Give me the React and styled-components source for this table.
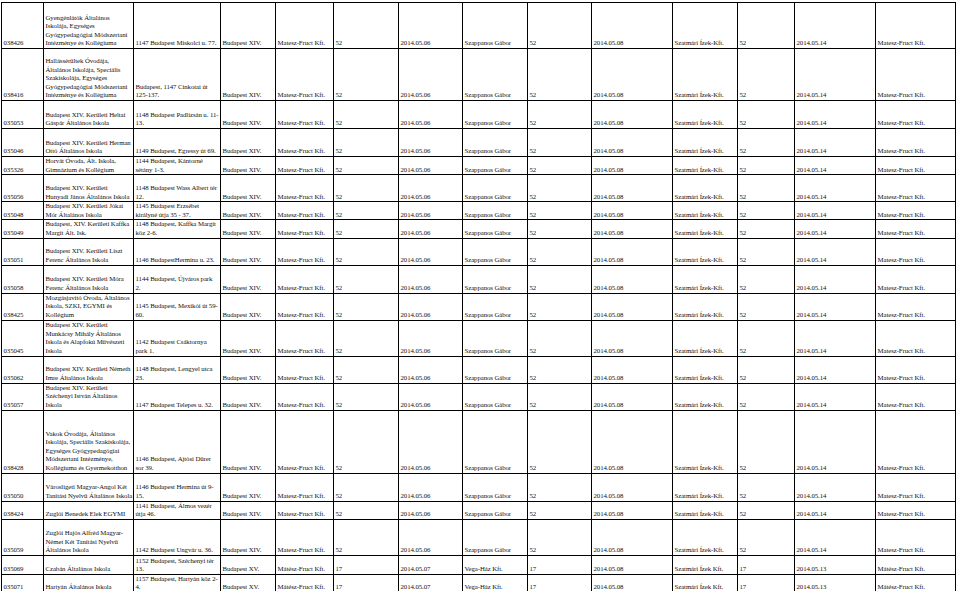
import React from "react";
import styled, { createGlobalStyle } from "styled-components";

const GlobalStyle = createGlobalStyle`
  html, body {
    margin: 0;
    padding: 0;
    background: #ffffff;
  }
  body {
    font-family: "Liberation Serif", "Times New Roman", serif;
    color: #111111;
  }
`;

const widths = [42, 90, 87, 55, 58, 65, 64, 65, 64, 81, 65, 57, 81, 80];

const valuesA = [
  "Matesz-Fruct Kft.",
  "52",
  "2014.05.06",
  "Szappanos Gábor",
  "52",
  "2014.05.08",
  "Szatmári Ízek-Kft.",
  "52",
  "2014.05.14",
  "Matesz-Fruct Kft.",
];

const valuesB = [
  "Mátész-Fruct Kft.",
  "17",
  "2014.05.07",
  "Vega-Ház Kft.",
  "17",
  "2014.05.08",
  "Szatmári Ízek Kft.",
  "17",
  "2014.05.13",
  "Mátész-Fruct Kft.",
];

const rows = [
  {
    id: "038426",
    h: 46,
    name: ["Gyengénlátók Általános", "Iskolája, Egységes", "Gyógypedagógiai Módszertani", "Intézménye és Kollégiuma"],
    addr: ["1147 Budapest Miskolci u. 77."],
  },
  {
    id: "038416",
    h: 52,
    name: [
      "Hallássérültek Óvodája,",
      "Általános Iskolája, Speciális",
      "Szakiskolája, Egységes",
      "Gyógypedagógiai Módszertani",
      "Intézménye és Kollégiuma",
    ],
    addr: ["Budapest, 1147 Cinkotai út", "125-137."],
  },
  {
    id: "035053",
    h: 28,
    name: ["Budapest XIV. Kerületi Heltai", "Gáspár Általános Iskola"],
    addr: ["1148 Budapest Padlizsán u. 11-", "13."],
  },
  {
    id: "035046",
    h: 28,
    name: ["Budapest XIV. Kerületi Herman", "Ottó Általános Iskola"],
    addr: ["1149 Budapest, Egressy út 69."],
  },
  {
    id: "035326",
    h: 18,
    name: ["Horvát Óvoda, Ált. Iskola,", "Gimnázium és Kollégium"],
    addr: ["1144 Budapest, Kántorné", "sétány 1-3."],
  },
  {
    id: "035056",
    h: 27,
    name: ["Budapest XIV. Kerületi", "Hunyadi János Általános Iskola"],
    addr: ["1148 Budapest Wass Albert tér", "12."],
  },
  {
    id: "035048",
    h: 18,
    name: ["Budapest XIV. Kerületi Jókai", "Mór Általános Iskola"],
    addr: ["1145 Budapest Erzsébet", "királyné útja 35 - 37."],
  },
  {
    id: "035049",
    h: 18,
    name: ["Budapest, XIV. Kerületi Kaffka", "Margit Ált. Isk."],
    addr: ["1148 Budapest, Kaffka Margit", "köz 2-6."],
  },
  {
    id: "035051",
    h: 27,
    name: ["Budapest XIV. Kerületi Liszt", "Ferenc Általános Iskola"],
    addr: ["1146 BudapestHermina u. 23."],
  },
  {
    id: "035058",
    h: 28,
    name: ["Budapest XIV. Kerületi Móra", "Ferenc Általános Iskola"],
    addr: ["1144 Budapest, Újváros park", "2."],
  },
  {
    id: "038425",
    h: 27,
    name: ["Mozgásjavító Óvoda, Általános", "Iskola, SZKI, EGYMI és", "Kollégium"],
    addr: ["1145 Budapest, Mexikói út 59-", "60."],
  },
  {
    id: "035045",
    h: 36,
    name: ["Budapest XIV. Kerületi", "Munkácsy Mihály Általános", "Iskola és Alapfokú Művészeti", "Iskola"],
    addr: ["1142 Budapest Csáktornya", "park 1."],
  },
  {
    id: "035062",
    h: 27,
    name: ["Budapest XIV. Kerületi Németh", "Imre Általános Iskola"],
    addr: ["1148 Budapest, Lengyel utca", "23."],
  },
  {
    id: "035057",
    h: 27,
    name: ["Budapest XIV. Kerületi", "Széchenyi István Általános", "Iskola"],
    addr: ["1147 Budapest Telepes u. 32."],
  },
  {
    id: "038428",
    h: 63,
    name: [
      "Vakok Óvodája, Általános",
      "Iskolája, Speciális Szakiskolája,",
      "Egységes Gyógypedagógiai",
      "Módszertani Intézménye,",
      "Kollégiuma és Gyermekotthon",
    ],
    addr: ["1146 Budapest, Ajtósi Dürer", "sor 39."],
  },
  {
    id: "035050",
    h: 28,
    name: ["Városligeti Magyar-Angol Két", "Tanítási Nyelvű Általános Iskola"],
    addr: ["1146 Budapest Hermina út 9-", "15."],
  },
  {
    id: "038424",
    h: 17,
    name: ["Zuglói Benedek Elek EGYMI"],
    addr: ["1141 Budapest, Álmos vezér", "útja 46."],
  },
  {
    id: "035059",
    h: 36,
    name: ["Zuglói Hajós Alfréd Magyar-", "Német Két Tanítási Nyelvű", "Általános Iskola"],
    addr: ["1142 Budapest Ungvár u. 36."],
  },
  {
    id: "035069",
    h: 19,
    district: "Budapest XV.",
    values: valuesB,
    name: ["Czabán Általános Iskola"],
    addr: ["1152 Budapest, Széchenyi tér", "13."],
  },
  {
    id: "035071",
    h: 18,
    district: "Budapest XV.",
    values: valuesB,
    name: ["Hartyán Általános Iskola"],
    addr: ["1157 Budapest, Hartyán köz 2-", "4."],
  },
];

function Lines({ items }) {
  return items.map((line, i) => (
    <React.Fragment key={i}>
      {i > 0 && <br />}
      {line}
    </React.Fragment>
  ));
}

export default function App() {
  return (
    <Page>
      <GlobalStyle />
      <Table>
        <colgroup>
          {widths.map((w, i) => (
            <Col key={i} $w={w} />
          ))}
        </colgroup>
        <tbody>
          {rows.map((r) => (
            <Row key={r.id} $h={r.h}>
              <Cell>{r.id}</Cell>
              <Cell>
                <Lines items={r.name} />
              </Cell>
              <Cell>
                <Lines items={r.addr} />
              </Cell>
              <Cell>{r.district || "Budapest XIV."}</Cell>
              {(r.values || valuesA).map((v, i) => (
                <Cell key={i}>{v}</Cell>
              ))}
            </Row>
          ))}
        </tbody>
      </Table>
    </Page>
  );
}

const Page = styled.div`
  padding: 2px 0 0 1px;
  width: 960px;
  box-sizing: border-box;
`;

const Table = styled.table`
  border-collapse: collapse;
  table-layout: fixed;
  width: 954px;
`;

const Col = styled.col`
  width: ${(p) => p.$w}px;
`;

const Row = styled.tr`
  height: ${(p) => p.$h}px;
`;

const Cell = styled.td`
  border: 1px solid #000000;
  padding: 0 0 0 1.5px;
  vertical-align: bottom;
  font-size: 6.8px;
  letter-spacing: -0.08px;
  line-height: 8.6px;
  white-space: nowrap;
  overflow: hidden;
  color: #111111;
`;
